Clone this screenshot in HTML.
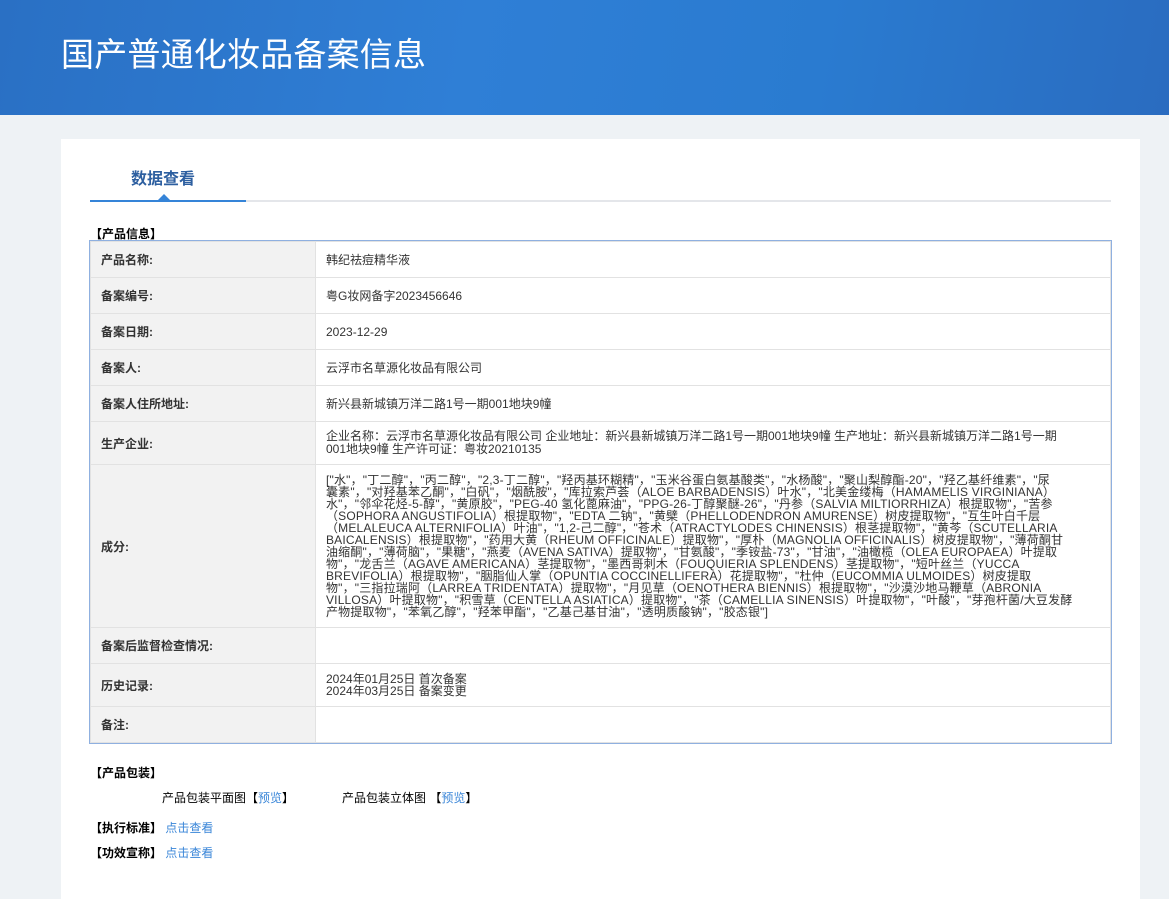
<!DOCTYPE html>
<html><head><meta charset="utf-8"><style>
*{margin:0;padding:0;box-sizing:border-box}
body{width:1169px;height:884px;overflow:hidden;background:#eef2f5;font-family:"Liberation Sans","Noto Sans CJK SC",sans-serif;color:#333}
.hd{height:115px;background:linear-gradient(100deg,#2a70c4 0%,#2f7fd6 40%,#2a7bd0 70%,#2a6cc0 100%);position:relative;overflow:hidden}
.hd h1{position:absolute;left:61px;top:28px;font-size:33px;font-weight:normal;color:#fff;letter-spacing:0.2px}
.card{position:absolute;left:61px;top:139px;width:1079px;height:760px;background:#fff}
.tab{position:absolute;left:70px;top:26px;font-size:16px;font-weight:bold;color:#2d5fa0}
.tl{position:absolute;left:29px;top:61px;width:1021px;height:2px;background:#e4e6ea}
.ta{position:absolute;left:29px;top:61px;width:156px;height:2px;background:#3584d8}
.tri{position:absolute;left:97px;top:55px;width:0;height:0;border-left:6px solid transparent;border-right:6px solid transparent;border-bottom:6px solid #3584d8}
.sec{position:absolute;font-size:12px;font-weight:bold;color:#000}
table{position:absolute;left:29px;top:102px;width:1021px;border-collapse:collapse;outline:1px solid #8fb0e0;font-size:12px}
td{border:1px solid #e2e2e2;padding:0 10px;vertical-align:middle}
td.l{width:225px;background:#f2f2f2;font-weight:bold;color:#333;font-size:12px}
.ing{line-height:12px;white-space:nowrap;font-size:12px;letter-spacing:0.18px}
a{color:#3a86d8;text-decoration:none}
.t{position:absolute;font-size:12px;color:#000}
</style></head><body>
<div class="hd"><h1>国产普通化妆品备案信息</h1></div>
<div class="card">
<div class="tab">数据查看</div>
<div class="tl"></div><div class="ta"></div><div class="tri"></div>
<div class="sec" style="left:29px;top:86px">【产品信息】</div>
<table>
<tr style="height:36px"><td class="l">产品名称:</td><td>韩纪祛痘精华液</td></tr>
<tr style="height:36px"><td class="l">备案编号:</td><td>粤G妆网备字2023456646</td></tr>
<tr style="height:36px"><td class="l">备案日期:</td><td>2023-12-29</td></tr>
<tr style="height:36px"><td class="l">备案人:</td><td>云浮市名草源化妆品有限公司</td></tr>
<tr style="height:36px"><td class="l">备案人住所地址:</td><td>新兴县新城镇万洋二路1号一期001地块9幢</td></tr>
<tr style="height:43px"><td class="l">生产企业:</td><td style="line-height:13px">企业名称：云浮市名草源化妆品有限公司 企业地址：新兴县新城镇万洋二路1号一期001地块9幢 生产地址：新兴县新城镇万洋二路1号一期<br>001地块9幢 生产许可证：粤妆20210135</td></tr>
<tr style="height:163px"><td class="l">成分:</td><td class="ing">["水"，"丁二醇"，"丙二醇"，"2,3-丁二醇"，"羟丙基环糊精"，"玉米谷蛋白氨基酸类"，"水杨酸"，"聚山梨醇酯-20"，"羟乙基纤维素"，"尿<br>囊素"，"对羟基苯乙酮"，"白矾"，"烟酰胺"，"库拉索芦荟（ALOE BARBADENSIS）叶水"，"北美金缕梅（HAMAMELIS VIRGINIANA）<br>水"，"邻伞花烃-5-醇"，"黄原胶"，"PEG-40 氢化蓖麻油"，"PPG-26-丁醇聚醚-26"，"丹参（SALVIA MILTIORRHIZA）根提取物"，"苦参<br>（SOPHORA ANGUSTIFOLIA）根提取物"，"EDTA 二钠"，"黄檗（PHELLODENDRON AMURENSE）树皮提取物"，"互生叶白千层<br>（MELALEUCA ALTERNIFOLIA）叶油"，"1,2-己二醇"，"苍术（ATRACTYLODES CHINENSIS）根茎提取物"，"黄芩（SCUTELLARIA<br>BAICALENSIS）根提取物"，"药用大黄（RHEUM OFFICINALE）提取物"，"厚朴（MAGNOLIA OFFICINALIS）树皮提取物"，"薄荷酮甘<br>油缩酮"，"薄荷脑"，"果糖"，"燕麦（AVENA SATIVA）提取物"，"甘氨酸"，"季铵盐-73"，"甘油"，"油橄榄（OLEA EUROPAEA）叶提取<br>物"，"龙舌兰（AGAVE AMERICANA）茎提取物"，"墨西哥刺木（FOUQUIERIA SPLENDENS）茎提取物"，"短叶丝兰（YUCCA<br>BREVIFOLIA）根提取物"，"胭脂仙人掌（OPUNTIA COCCINELLIFERA）花提取物"，"杜仲（EUCOMMIA ULMOIDES）树皮提取<br>物"，"三指拉瑞阿（LARREA TRIDENTATA）提取物"，"月见草（OENOTHERA BIENNIS）根提取物"，"沙漠沙地马鞭草（ABRONIA<br>VILLOSA）叶提取物"，"积雪草（CENTELLA ASIATICA）提取物"，"茶（CAMELLIA SINENSIS）叶提取物"，"叶酸"，"芽孢杆菌/大豆发酵<br>产物提取物"，"苯氧乙醇"，"羟苯甲酯"，"乙基己基甘油"，"透明质酸钠"，"胶态银"]</td></tr>
<tr style="height:36px"><td class="l">备案后监督检查情况:</td><td></td></tr>
<tr style="height:43px"><td class="l">历史记录:</td><td style="line-height:12px">2024年01月25日 首次备案<br>2024年03月25日 备案变更</td></tr>
<tr style="height:36px"><td class="l">备注:</td><td></td></tr>
</table>
<div class="sec" style="left:29px;top:625px">【产品包装】</div>
<div class="t" style="left:101px;top:650px">产品包装平面图【<a>预览</a>】</div>
<div class="t" style="left:281px;top:650px">产品包装立体图 【<a>预览</a>】</div>
<div class="sec" style="left:29px;top:680px">【执行标准】 <a style="font-weight:normal">点击查看</a></div>
<div class="sec" style="left:29px;top:705px">【功效宣称】 <a style="font-weight:normal">点击查看</a></div>
</div>
</body></html>
